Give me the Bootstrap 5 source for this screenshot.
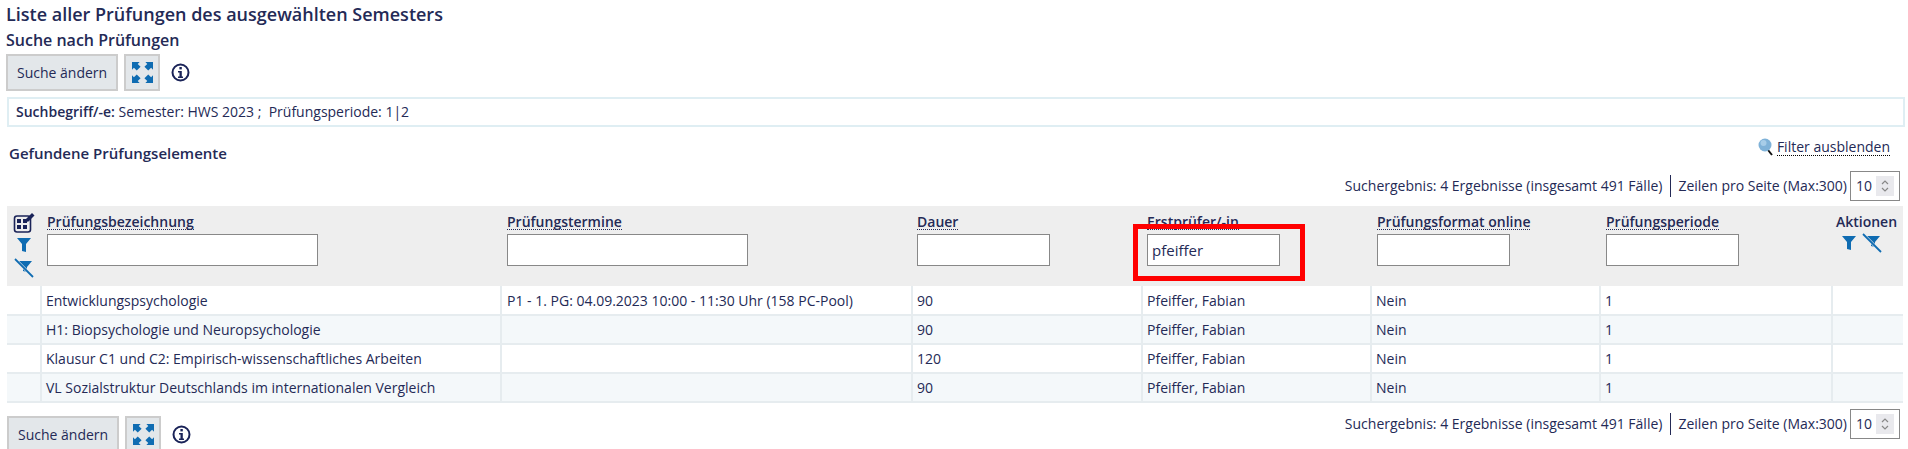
<!DOCTYPE html>
<html lang="de"><head><meta charset="utf-8"><title>Prüfungen</title>
<link href="https://cdn.jsdelivr.net/npm/bootstrap@5.3.0/dist/css/bootstrap.min.css" rel="stylesheet">
<style>
html,body{height:449px;overflow:hidden}
body{font-family:"Open Sans",sans-serif;font-size:14px;color:#242a56;background:#fff;line-height:18px}
.pg{padding:0 5px 0 6px}
.ttl{font-size:18px;font-weight:600;line-height:22px;margin:3px 0 0;}
.sub{font-size:16px;font-weight:600;line-height:20px;margin:5px 0 4px}
.tbtn{background:#e3e7ea;border:2px solid #ccc;border-radius:0;color:#242a56;height:37px;font-size:14px;padding:0 9px;line-height:33px}
.ibtn{width:36px;padding:0;display:flex;align-items:center;justify-content:center}
.sbox{border:2px solid #dfeef3;height:30px;margin:6px -2px 0 1px;padding:0 7px;line-height:26px;font-size:14px}
.sbox b{font-weight:600}
.found{font-size:15px;font-weight:600;padding-left:3px;line-height:20px;margin-top:16px}
.filt{color:#242a56;text-decoration:none;border-bottom:1px dotted #000;line-height:16px}
.pick{border:1px solid #888;width:50px;height:30px;padding:0 5px;font-size:14px;line-height:28px;position:relative}
.spin{width:18px;height:20px;background:#e9e9ed;display:flex;align-items:center;justify-content:center}
.sep{border-left:1px solid #242a56;height:22px}
.rbar{padding-right:3px}
.rtab{table-layout:fixed;width:1896px;margin:5px 0 0 1px;border-collapse:collapse}
.rtab th{background:#eee;vertical-align:top;font-weight:600;padding:7px 6px 0;height:80px;font-size:14px;position:relative;border:0}
.rtab th.nar{padding-left:5px}
.rtab th span.lnk{border-bottom:1px dotted #242a56;line-height:15px;display:inline-block}
.rtab th input{display:block;border:1px solid #888;background:#fff;height:32px;margin-top:3px;padding:0 4px;font-size:15px;font-weight:400;color:#242a56;border-radius:0;outline:0}
.rtab td{height:29px;padding:0 4px;border:1px solid #e6ecef;border-width:0 2px 2px 0;line-height:27px;white-space:nowrap}
.rtab td:last-child{border-right:0}
.rtab tr:nth-child(even) td{background:#f4f8fa}
.rtab th.act{padding:7px 0 0;text-align:center}
.hl{position:absolute;left:-9px;top:18px;width:172px;height:57px;border:5px solid #f00;pointer-events:none}
.ic{display:block}
</style></head><body>
<div class="pg">
<h1 class="ttl">Liste aller Prüfungen des ausgewählten Semesters</h1>
<h2 class="sub">Suche nach Prüfungen</h2>
<div class="d-flex align-items-center" style="gap:6px">
<button class="btn tbtn" type="button">Suche ändern</button>
<button class="btn tbtn ibtn" type="button" aria-label="Vollbild"><svg width="21" height="21" viewBox="0 0 22 22" fill="#0f6cb2"><path d="M0 0h8L6 2 9 5 5 9 2 6 0 8zM22 0h-8l2 2-3 3 4 4 3-3 2 2zM0 22h8l-2-2 3-3-4-4-3 3-2-2zM22 22h-8l2-2-3-3 4-4 3 3 2-2z"/></svg></button>
<svg style="margin-left:5px" width="19" height="19" viewBox="0 0 19 19" aria-label="Info"><circle cx="9.500" cy="9.500" r="8" fill="none" stroke="#1a2358" stroke-width="2"/><rect x="8.400" y="4" width="2.400" height="2.400" fill="#1a2358"/><path d="M7 8h3.800v5.500H12V15H7v-1.500h1.500V9.500H7z" fill="#1a2358"/></svg>
</div>
<div class="sbox"><b>Suchbegriff/-e:</b> Semester: HWS 2023 ;&nbsp; Prüfungsperiode: 1|2</div>
<div class="d-flex justify-content-between">
<div class="found">Gefundene Prüfungselemente</div>
<div class="d-flex align-items-center gap-1" style="margin-top:10px;height:20px;padding-right:13px">
<svg width="15" height="20" viewBox="0 0 15 20"><path d="M10 13l4 5" stroke="#111" stroke-width="2"/><circle cx="7" cy="8" r="6.500" fill="#7fb2d8"/><circle cx="5.500" cy="6" r="3" fill="#a7cde8"/></svg>
<a class="filt" href="#">Filter ausblenden</a>
</div></div>
<div class="d-flex justify-content-end align-items-center gap-2 rbar" style="margin-top:8px">
<span>Suchergebnis: 4 Ergebnisse (insgesamt 491 Fälle)</span><span class="sep"></span><span style="margin-left:-1px;margin-right:-5px">Zeilen pro Seite (Max:300)</span>
<div class="pick d-flex align-items-center justify-content-between">10<span class="spin"><svg width="10" height="16" viewBox="0 0 10 16" fill="none" stroke="#888" stroke-width="1.200"><path d="M2 6l3-3 3 3M2 10l3 3 3-3"/></svg></span></div>
</div>
<table class="rtab">
<colgroup><col style="width:34px"><col style="width:460px"><col style="width:411px"><col style="width:230px"><col style="width:229px"><col style="width:229px"><col style="width:232px"><col style="width:71px"></colgroup>
<thead><tr>
<th style="padding:6px 0 0 6px">
<svg class="ic" width="22" height="22" viewBox="0 0 22 22"><rect x="1.500" y="4" width="16" height="16" rx="2.500" fill="none" stroke="#1a2358" stroke-width="1.600"/><path d="M4 7h4v4H4zM10 7h4v4h-4zM4 13h4v4H4zM10 13h4v4h-4z" fill="#1a2358"/><path d="M13 7l6-6 2.500 2.500-6 6-3 .5z" fill="#1a2358"/></svg>
<svg class="ic" style="margin:4px 0 0 4px" width="14" height="15" viewBox="0 0 14 15" fill="#0f6cb2"><path d="M0 0h14L9 6v8l-4-1V6z"/></svg>
<svg class="ic" style="margin:5px 0 0 1px" width="20" height="20" viewBox="0 0 20 20"><path d="M4 3h14l-5 6v5l-4-1V9z" fill="#0f6cb2"/><path d="M1 1l18 18" stroke="#eee" stroke-width="3"/><path d="M1 1l18 18" stroke="#0f6cb2" stroke-width="1.800"/></svg>
</th>
<th><span class="lnk">Prüfungsbezeichnung</span><input type="text" style="width:271px"></th>
<th><span class="lnk">Prüfungstermine</span><input type="text" style="width:241px"></th>
<th class="nar"><span class="lnk">Dauer</span><input type="text" style="width:133px"></th>
<th class="nar"><span class="lnk">Erstprüfer/-in</span><input type="text" value="pfeiffer" style="width:133px"><div class="hl"></div></th>
<th><span class="lnk">Prüfungsformat online</span><input type="text" style="width:133px"></th>
<th><span class="lnk">Prüfungsperiode</span><input type="text" style="width:133px"></th>
<th class="act"><span style="margin-left:-2px;white-space:nowrap">Aktionen</span>
<div class="d-flex" style="margin:5px 0 0 10px;gap:6px">
<svg width="14" height="15" viewBox="0 0 14 15" fill="#0f6cb2"><path d="M0 0h14L9 6v8l-4-1V6z"/></svg>
<svg style="margin-top:-3px" width="20" height="20" viewBox="0 0 20 20"><path d="M4 3h14l-5 6v5l-4-1V9z" fill="#0f6cb2"/><path d="M1 1l18 18" stroke="#eee" stroke-width="3"/><path d="M1 1l18 18" stroke="#0f6cb2" stroke-width="1.800"/></svg>
</div></th>
</tr></thead>
<tbody>
<tr><td></td><td>Entwicklungspsychologie</td><td style="padding-left:5px">P1 - 1. PG: 04.09.2023 10:00 - 11:30 Uhr (158 PC-Pool)</td><td>90</td><td>Pfeiffer, Fabian</td><td>Nein</td><td>1</td><td></td></tr>
<tr><td></td><td>H1: Biopsychologie und Neuropsychologie</td><td></td><td>90</td><td>Pfeiffer, Fabian</td><td>Nein</td><td>1</td><td></td></tr>
<tr><td></td><td>Klausur C1 und C2: Empirisch-wissenschaftliches Arbeiten</td><td></td><td>120</td><td>Pfeiffer, Fabian</td><td>Nein</td><td>1</td><td></td></tr>
<tr><td></td><td>VL Sozialstruktur Deutschlands im internationalen Vergleich</td><td></td><td>90</td><td>Pfeiffer, Fabian</td><td>Nein</td><td>1</td><td></td></tr>
</tbody></table>
<div class="d-flex justify-content-between align-items-start" style="margin-top:13px">
<div class="d-flex align-items-center" style="margin-left:1px;gap:6px">
<button class="btn tbtn" type="button">Suche ändern</button>
<button class="btn tbtn ibtn" type="button" aria-label="Vollbild"><svg width="21" height="21" viewBox="0 0 22 22" fill="#0f6cb2"><path d="M0 0h8L6 2 9 5 5 9 2 6 0 8zM22 0h-8l2 2-3 3 4 4 3-3 2 2zM0 22h8l-2-2 3-3-4-4-3 3-2-2zM22 22h-8l2-2-3-3 4-4 3 3 2-2z"/></svg></button>
<svg style="margin-left:5px" width="19" height="19" viewBox="0 0 19 19" aria-label="Info"><circle cx="9.500" cy="9.500" r="8" fill="none" stroke="#1a2358" stroke-width="2"/><rect x="8.400" y="4" width="2.400" height="2.400" fill="#1a2358"/><path d="M7 8h3.800v5.500H12V15H7v-1.500h1.500V9.500H7z" fill="#1a2358"/></svg>
</div>
<div class="d-flex justify-content-end align-items-center gap-2 rbar" style="margin-top:-7px">
<span>Suchergebnis: 4 Ergebnisse (insgesamt 491 Fälle)</span><span class="sep"></span><span style="margin-left:-1px;margin-right:-5px">Zeilen pro Seite (Max:300)</span>
<div class="pick d-flex align-items-center justify-content-between">10<span class="spin"><svg width="10" height="16" viewBox="0 0 10 16" fill="none" stroke="#888" stroke-width="1.200"><path d="M2 6l3-3 3 3M2 10l3 3 3-3"/></svg></span></div>
</div></div>
</div>
</body></html>
